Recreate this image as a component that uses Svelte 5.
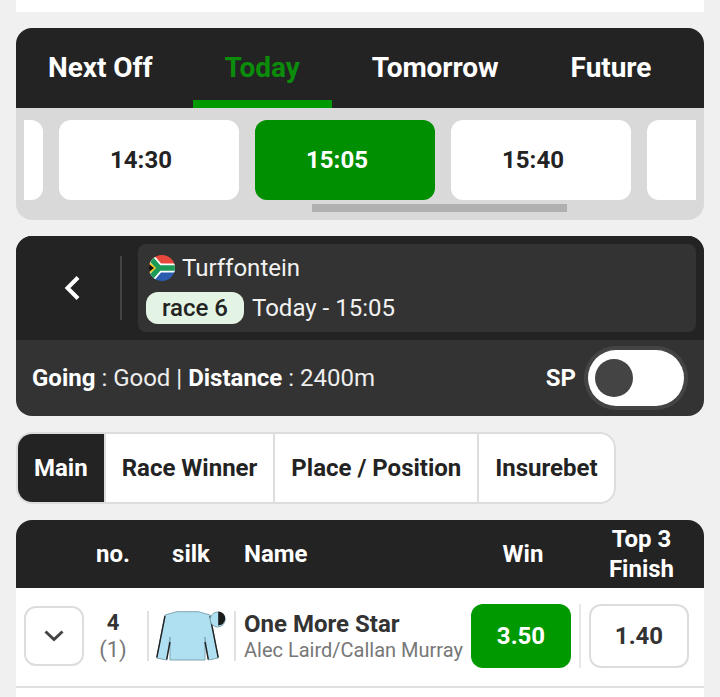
<script>
	const tabs = ['Next Off', 'Today', 'Tomorrow', 'Future']
	const times = ['', '14:30', '15:05', '15:40', '']
	const markets = ['Main', 'Race Winner', 'Place / Position', 'Insurebet']
</script>

<div class="page">
	<div class="top-strip"></div>

	<section class="schedule">
		<nav class="day-tabs">
			{#each tabs as tab}
				<span class="day-tab" class:active={tab === 'Today'}>{tab}</span>
			{/each}
		</nav>
		<div class="strip">
			<div class="times">
				{#each times as time}
					<div class="time" class:selected={time === '15:05'}>{time}</div>
				{/each}
			</div>
			<div class="thumb"></div>
		</div>
	</section>

	<section class="race">
		<div class="race-top">
			<div class="back">
				<svg width="18" height="26" viewBox="0 0 18 26">
					<path d="M15 2.5 4.5 13 15 23.5" fill="none" stroke="#fff" stroke-width="4" />
				</svg>
			</div>
			<div class="race-info">
				<div class="venue">
					<svg class="flag" width="26" height="26" viewBox="0 0 26 26">
						<defs>
							<clipPath id="flag-clip"><circle cx="13" cy="13" r="13" /></clipPath>
						</defs>
						<g clip-path="url(#flag-clip)">
							<rect width="26" height="13" fill="#e8483c" />
							<rect y="13" width="26" height="13" fill="#2a5cb0" />
							<path d="M-2 -1 10 13-2 27M10 13H27" fill="none" stroke="#fff" stroke-width="9" />
							<path d="M-2 -1 10 13-2 27M10 13H27" fill="none" stroke="#1b9a58" stroke-width="5.5" />
							<path d="M-1 7 6 13-1 19Z" fill="#111" stroke="#f5c11c" stroke-width="1.6" />
						</g>
					</svg>
					<span>Turffontein</span>
				</div>
				<div class="when">
					<span class="pill">race 6</span>
					<span>Today - 15:05</span>
				</div>
			</div>
		</div>
		<div class="race-bottom">
			<div class="going"><b>Going</b> : Good | <b>Distance</b> : 2400m</div>
			<div class="sp">
				<b>SP</b>
				<div class="toggle"><div class="knob"></div></div>
			</div>
		</div>
	</section>

	<div class="markets">
		{#each markets as market}
			<div class="market" class:active={market === 'Main'}>{market}</div>
		{/each}
	</div>

	<section class="runners">
		<div class="head">
			<div class="c-expand"></div>
			<div class="c-no">no.</div>
			<div class="c-silk">silk</div>
			<div class="c-name">Name</div>
			<div class="c-win">Win</div>
			<div class="c-top">Top 3<br />Finish</div>
		</div>
		<div class="runner">
			<div class="c-expand">
				<div class="expand">
					<svg width="20" height="12" viewBox="0 0 20 12">
						<path d="M1.5 1.5 10 9.5 18.5 1.5" fill="none" stroke="#444" stroke-width="3" />
					</svg>
				</div>
			</div>
			<div class="c-no cell-no">
				<b>4</b>
				<span>(1)</span>
			</div>
			<div class="cell-silk">
				<svg width="70" height="52" viewBox="0 0 70 52">
					<path d="M9 5 20.7 1.7H42.3L54 5 62.3 48 52.3 50 49 27V50H14V27L10.7 50 .7 48Z" fill="#aee0f1" stroke="#7fa5b3" stroke-width="1" />
					<path d="M9 6 .8 47.5M54 6 62.2 47.5M14 32 10.7 49.5M49 32 52.3 49.5" fill="none" stroke="#222" stroke-width="1.4" />
					<circle cx="61.7" cy="9.5" r="7.5" fill="#aee0f1" stroke="#7fa5b3" />
					<path d="M62.2 1.5a7 7 0 0 1 0 14Z" fill="#1b1b1b" />
				</svg>
			</div>
			<div class="c-name cell-name">
				<div class="horse">One More Star</div>
				<div class="jockey">Alec Laird/Callan Murray</div>
			</div>
			<div class="c-win"><div class="odds win">3.50</div></div>
			<div class="c-top cell-top"><div class="odds">1.40</div></div>
		</div>
		<div class="next-row"></div>
	</section>
</div>

<style>
	:global(body) {
		background: #f0f0f0;
	}

	.page {
		display: flex;
		flex-direction: column;
		gap: 16px;
		height: 697px;
		padding: 0 16px;
		box-sizing: border-box;
		overflow: hidden;
		font-family: Roboto, 'Liberation Sans', sans-serif;
		color: #232323;
	}

	.page > * {
		flex-shrink: 0;
	}

	.top-strip {
		height: 12px;
		background: #fff;
	}

	.schedule {
		border-radius: 16px;
		overflow: hidden;
		background: #d9d9d9;
	}

	.day-tabs {
		display: flex;
		gap: 8px;
		height: 80px;
		background: #232323;
	}

	.day-tab {
		box-sizing: border-box;
		padding: 0 32px;
		line-height: 80px;
		font-size: 28px;
		font-weight: 700;
		letter-spacing: -0.05px;
		color: #fff;
		white-space: nowrap;
	}

	.day-tab.active {
		height: 80px;
		border-bottom: 8px solid #009900;
		color: #0b8c0b;
	}

	.strip {
		padding: 12px 8px 8px;
	}

	.times {
		display: flex;
		gap: 16px;
		overflow: hidden;
		height: 80px;
	}

	.time {
		flex: 0 0 180px;
		box-sizing: border-box;
		padding-right: 16px;
		border-radius: 12px;
		background: #fff;
		font-size: 24px;
		font-weight: 700;
		line-height: 80px;
		text-align: center;
	}

	.time:first-child {
		margin-left: -161px;
	}

	.time.selected {
		background: #008f00;
		color: #fff;
	}

	.thumb {
		width: 255px;
		height: 8px;
		margin: 4px 0 0 288px;
		background: #b0b0b0;
	}

	.race {
		border-radius: 16px;
		overflow: hidden;
		background: #333;
		color: #fff;
	}

	.race-top {
		display: flex;
		height: 104px;
		padding: 8px;
		box-sizing: border-box;
		background: #232323;
	}

	.back {
		display: flex;
		align-items: center;
		justify-content: center;
		flex: 0 0 98px;
		height: 64px;
		padding-right: 1px;
		box-sizing: border-box;
		border-right: 2px solid #444;
		align-self: center;
	}

	.race-info {
		flex: 1;
		margin-left: 16px;
		padding: 8px;
		border-radius: 8px;
		background: #333;
		font-size: 24px;
	}

	.venue {
		display: flex;
		align-items: center;
		gap: 7px;
		height: 32px;
		padding-left: 3px;
		color: #f2f2f2;
	}

	.when {
		display: flex;
		align-items: center;
		gap: 8px;
		height: 32px;
		margin-top: 8px;
		color: #f2f2f2;
	}

	.pill {
		padding: 0 16px;
		border-radius: 12px;
		background: #e4f4e4;
		color: #232323;
		font-weight: 500;
		line-height: 32px;
	}

	.race-bottom {
		display: flex;
		align-items: center;
		justify-content: space-between;
		height: 76px;
		padding: 0 20px 0 16px;
		font-size: 24px;
	}

	.going {
		color: #eee;
	}

	.going b,
	.sp b {
		color: #fff;
		font-weight: 700;
	}

	.sp {
		display: flex;
		align-items: center;
		gap: 12px;
	}

	.toggle {
		display: flex;
		align-items: center;
		width: 96px;
		height: 56px;
		padding-left: 7px;
		box-sizing: border-box;
		border-radius: 28px;
		background: #fff;
		box-shadow: 0 0 0 4px #444;
	}

	.knob {
		width: 38px;
		height: 38px;
		border-radius: 50%;
		background: #444;
	}

	.markets {
		display: flex;
		align-self: flex-start;
		height: 72px;
		box-sizing: border-box;
		border: 2px solid #ddd;
		border-radius: 16px;
		overflow: hidden;
		background: #fff;
		font-size: 24px;
		font-weight: 700;
	}

	.market {
		padding: 0 16px;
		line-height: 68px;
		border-left: 2px solid #ddd;
		white-space: nowrap;
	}

	.market:first-child {
		border-left: 0;
	}

	.market.active {
		background: #232323;
		color: #fff;
	}

	.runners {
		border-radius: 16px 16px 0 0;
		overflow: hidden;
		background: #fff;
	}

	.head,
	.runner {
		display: flex;
		align-items: center;
	}

	.head {
		height: 68px;
		background: #232323;
		color: #fff;
		font-size: 24px;
		font-weight: 700;
		line-height: 30px;
		text-align: center;
	}

	.runner {
		height: 96px;
		padding-bottom: 2px;
		border-bottom: 2px solid #e0e0e0;
	}

	.next-row {
		height: 12px;
	}

	.c-expand {
		flex: 0 0 68px;
		padding-left: 8px;
		box-sizing: border-box;
	}

	.c-no {
		flex: 0 0 58px;
	}

	.c-silk {
		flex: 0 0 102px;
		padding-right: 4px;
		box-sizing: border-box;
	}

	.c-name {
		flex: 0 0 227px;
		white-space: nowrap;
		text-align: left;
	}

	.c-win {
		flex: 0 0 100px;
	}

	.c-top {
		flex: 0 0 133px;
	}

	.head .c-win {
		padding-left: 4px;
		box-sizing: border-box;
	}

	.head .c-top {
		padding-left: 8px;
		box-sizing: border-box;
	}

	.expand {
		display: flex;
		align-items: center;
		justify-content: center;
		width: 60px;
		height: 60px;
		box-sizing: border-box;
		border: 2px solid #ddd;
		border-radius: 12px;
	}

	.cell-no {
		display: flex;
		flex-direction: column;
		align-items: center;
		font-size: 22px;
		line-height: 27px;
	}

	.cell-no b {
		font-weight: 700;
		color: #333;
	}

	.cell-no span {
		color: #777;
	}

	.cell-silk {
		display: flex;
		align-items: center;
		flex: 0 0 89px;
		height: 50px;
		margin: 0 8px 0 5px;
		padding-left: 7px;
		box-sizing: border-box;
		border-left: 2px solid #e0e0e0;
		border-right: 2px solid #e0e0e0;
	}

	.horse {
		font-size: 24px;
		font-weight: 700;
		color: #333;
		line-height: 28px;
	}

	.jockey {
		font-size: 20px;
		color: #777;
		line-height: 24px;
	}

	.odds {
		display: flex;
		align-items: center;
		justify-content: center;
		width: 100px;
		height: 64px;
		box-sizing: border-box;
		border: 2px solid #ddd;
		border-radius: 12px;
		font-size: 24px;
		font-weight: 700;
		color: #333;
	}

	.odds.win {
		border: 0;
		background: #009900;
		color: #fff;
	}

	.cell-top {
		height: 64px;
		margin-left: 8px;
		padding-left: 8px;
		border-left: 2px solid #e8e8e8;
		box-sizing: border-box;
		flex-basis: 125px;
	}
</style>
